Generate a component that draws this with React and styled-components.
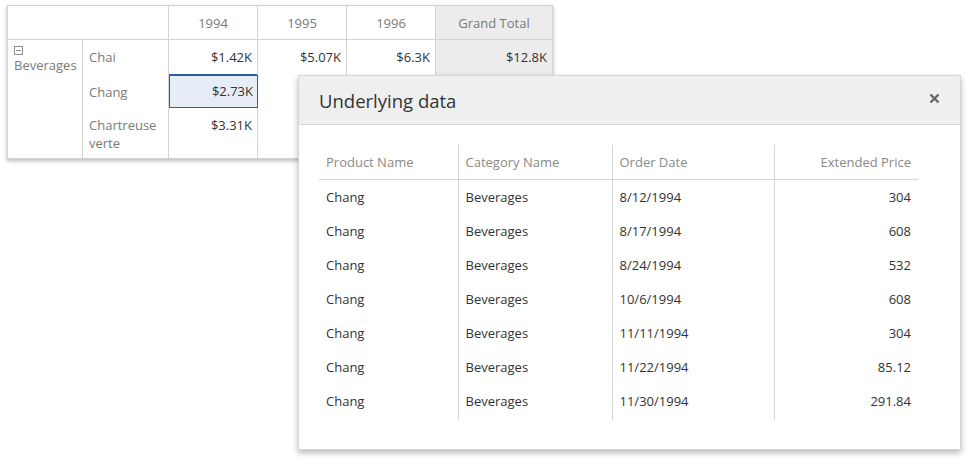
import React from "react";
import styled, { createGlobalStyle } from "styled-components";

const Global = createGlobalStyle`
  html, body { margin: 0; padding: 0; background: #fff; }
  body { font-family: "Open Sans", "Noto Sans", sans-serif; font-size: 13px; color: #333; }
`;

const Stage = styled.div`
  position: relative;
  width: 975px;
  height: 466px;
  overflow: hidden;
  padding: 5px 0 0 7px;
  box-sizing: border-box;
`;

const Pivot = styled.table`
  border-collapse: collapse;
  table-layout: fixed;
  width: 546px;
  background: #fff;
  box-shadow: 0 2px 4px rgba(0, 0, 0, 0.28);
  border: 1px solid #d3d3d3;
`;

const HeadCell = styled.th`
  height: 33px;
  padding: 0 6px;
  font-weight: 400;
  color: #7a7a7a;
  text-align: center;
  border: 1px solid #d3d3d3;
  background: ${(p) => (p.$total ? "#ececec" : "#fff")};
`;

const RowHead = styled.td`
  vertical-align: top;
  padding: 8px 6px 0;
  color: #7a7a7a;
  line-height: 18px;
  border-left: 1px solid #d3d3d3;
  border-right: 1px solid #d3d3d3;
  height: ${(p) => p.$h}px;
  box-sizing: border-box;
`;

const BevHead = styled(RowHead)`
  padding-top: 6px;
`;

const DataCell = styled.td`
  vertical-align: top;
  padding: ${(p) => (p.$sel ? "7px 4px 0" : "8px 5px 0")};
  text-align: right;
  line-height: 18px;
  color: #333;
  border-left: 1px solid #d3d3d3;
  border-right: 1px solid #d3d3d3;
  background: ${(p) => (p.$sel ? "#e6edf7" : p.$total ? "#ececec" : "#fff")};
  outline: ${(p) => (p.$sel ? "1px solid #2a5ea8" : "none")};
  outline-offset: -1px;
  ${(p) => (p.$sel ? "border: 1px solid #2a5ea8;" : "")}
`;

const CollapseIcon = styled.svg`
  display: block;
  margin: 0 0 1px 0;
`;

const Popup = styled.div`
  position: absolute;
  left: 298px;
  top: 75px;
  width: 663px;
  height: 375px;
  box-sizing: border-box;
  background: #fff;
  border: 1px solid #d6d6d6;
  box-shadow: 0 3px 6px rgba(0, 0, 0, 0.28);
  display: flex;
  flex-direction: column;
`;

const PopupHeader = styled.div`
  height: 48px;
  flex: none;
  background: #efefef;
  border-bottom: 1px solid #d6d6d6;
  display: flex;
  align-items: center;
  justify-content: space-between;
  padding: 0 20px 0 20px;
`;

const Title = styled.div`
  font-size: 18.5px;
  color: #333;
`;

const CloseBtn = styled.svg`
  display: block;
  margin-top: -4px;
`;

const PopupBody = styled.div`
  padding: 20px 43px 0 20px;
`;

const Grid = styled.table`
  border-collapse: collapse;
  table-layout: fixed;
  width: 599px;
`;

const GHead = styled.th`
  height: 34px;
  padding: 0 7px;
  font-weight: 400;
  color: #8a8a8a;
  text-align: ${(p) => (p.$right ? "right" : "left")};
  border-bottom: 1px solid #d6d6d6;
  border-left: ${(p) => (p.$first ? "none" : "1px solid #d6d6d6")};
`;

const GCell = styled.td`
  height: 34px;
  padding: 0 7px;
  color: #333;
  text-align: ${(p) => (p.$right ? "right" : "left")};
  border-left: ${(p) => (p.$first ? "none" : "1px solid #d6d6d6")};
  white-space: nowrap;
`;

const Spacer = styled.td`
  height: 2px;
  padding: 0;
  border-left: ${(p) => (p.$first ? "none" : "1px solid #d6d6d6")};
`;

const rows = [
  ["8/12/1994", "304"],
  ["8/17/1994", "608"],
  ["8/24/1994", "532"],
  ["10/6/1994", "608"],
  ["11/11/1994", "304"],
  ["11/22/1994", "85.12"],
  ["11/30/1994", "291.84"],
];

export default function App() {
  return (
    <>
      <Global />
      <Stage>
        <Pivot>
          <colgroup>
            <col style={{ width: 75 }} />
            <col style={{ width: 86 }} />
            <col style={{ width: 89 }} />
            <col style={{ width: 89 }} />
            <col style={{ width: 89 }} />
            <col style={{ width: 117 }} />
          </colgroup>
          <thead>
            <tr>
              <HeadCell colSpan={2} />
              <HeadCell>1994</HeadCell>
              <HeadCell>1995</HeadCell>
              <HeadCell>1996</HeadCell>
              <HeadCell $total>Grand Total</HeadCell>
            </tr>
          </thead>
          <tbody>
            <tr>
              <BevHead rowSpan={3} $h={35}>
                <CollapseIcon width="9" height="9" viewBox="0 0 9 9">
                  <rect x="0.5" y="0.5" width="8" height="8" fill="none" stroke="#8a8a8a" />
                  <line x1="2" y1="4.5" x2="7" y2="4.5" stroke="#8a8a8a" />
                </CollapseIcon>
                Beverages
              </BevHead>
              <RowHead $h={35}>Chai</RowHead>
              <DataCell>$1.42K</DataCell>
              <DataCell>$5.07K</DataCell>
              <DataCell>$6.3K</DataCell>
              <DataCell $total>$12.8K</DataCell>
            </tr>
            <tr>
              <RowHead $h={33}>Chang</RowHead>
              <DataCell $sel>$2.73K</DataCell>
              <DataCell />
              <DataCell />
              <DataCell $total />
            </tr>
            <tr>
              <RowHead $h={51}>Chartreuse verte</RowHead>
              <DataCell>$3.31K</DataCell>
              <DataCell />
              <DataCell />
              <DataCell $total />
            </tr>
          </tbody>
        </Pivot>

        <Popup>
          <PopupHeader>
            <Title>Underlying data</Title>
            <CloseBtn width="11" height="11" viewBox="0 0 11 11">
              <path d="M1.5 1.5 L9.5 9.5 M9.5 1.5 L1.5 9.5" stroke="#666" strokeWidth="2.4" />
            </CloseBtn>
          </PopupHeader>
          <PopupBody>
            <Grid>
              <colgroup>
                <col style={{ width: 139 }} />
                <col style={{ width: 154 }} />
                <col style={{ width: 162 }} />
                <col style={{ width: 144 }} />
              </colgroup>
              <thead>
                <tr>
                  <GHead $first>Product Name</GHead>
                  <GHead>Category Name</GHead>
                  <GHead>Order Date</GHead>
                  <GHead $right>Extended Price</GHead>
                </tr>
              </thead>
              <tbody>
                {rows.map(([d, p], i) => (
                  <tr key={i}>
                    <GCell $first>Chang</GCell>
                    <GCell>Beverages</GCell>
                    <GCell>{d}</GCell>
                    <GCell $right>{p}</GCell>
                  </tr>
                ))}
                <tr>
                  <Spacer $first />
                  <Spacer />
                  <Spacer />
                  <Spacer />
                </tr>
              </tbody>
            </Grid>
          </PopupBody>
        </Popup>
      </Stage>
    </>
  );
}
